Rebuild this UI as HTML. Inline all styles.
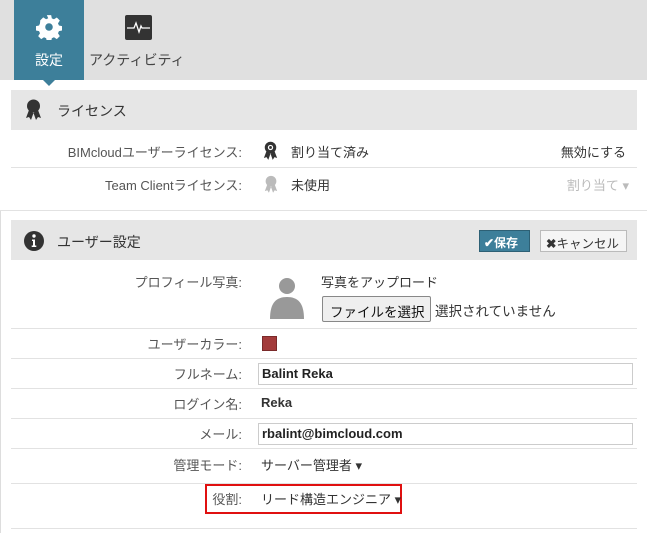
<!DOCTYPE html>
<html><head><meta charset="utf-8"><style>
*{margin:0;padding:0;box-sizing:border-box}
body{width:647px;height:533px;overflow:hidden;background:#fff;font-family:"Liberation Sans","Noto Sans CJK JP",sans-serif;font-size:13px;color:#333;position:relative}
.a{position:absolute;white-space:nowrap}
.lab{position:absolute;right:405px;white-space:nowrap;color:#555}
.sep{position:absolute;left:11px;width:626px;height:1px;background:#e2e2e2}
.hdr{position:absolute;left:11px;width:626px;height:40px;background:#e6e6e6}
.inp{position:absolute;left:258px;width:375px;height:22px;border:1px solid #ccc;font-weight:bold;padding:2px 0 0 3px;color:#222}
</style></head><body>
<div class="a" style="left:0;top:0;width:647px;height:80px;background:#e0e0e0"></div>
<div class="a" style="left:14px;top:0;width:70px;height:80px;background:#3d7f9a"></div>
<div class="a" style="left:43px;top:80px;width:0;height:0;border-left:6px solid transparent;border-right:6px solid transparent;border-top:6px solid #3d7f9a"></div>
<svg class="a" style="left:36px;top:14px" width="26" height="26" viewBox="0 0 24 24"><path fill="#fff" d="M10 1h4l.6 3 2 .9 2.6-1.7 2.8 2.8-1.7 2.6.9 2 3 .6v4l-3 .6-.9 2 1.7 2.6-2.8 2.8-2.6-1.7-2 .9-.6 3h-4l-.6-3-2-.9-2.6 1.7-2.8-2.8 1.7-2.6-.9-2-3-.6v-4l3-.6.9-2L3.9 5.9l2.8-2.8 2.6 1.7 2-.9z"/><circle cx="12" cy="12" r="3.5" fill="#3d7f9a"/></svg>
<div class="a" style="left:35px;top:50px;color:#fff;font-size:14px">設定</div>
<svg class="a" style="left:125px;top:15px" width="27" height="25" viewBox="0 0 27 25"><rect width="27" height="25" rx="2" fill="#333"/><path d="M2 13h7l2-5 3 9 2-6 1 2h8" stroke="#fff" stroke-width="1.3" fill="none"/></svg>
<div class="a" style="left:89px;top:50px;font-size:14px;color:#444">アクティビティ</div>

<div class="a" style="left:0;top:210px;width:1px;height:323px;background:#ddd"></div>
<div class="hdr" style="top:90px"></div>
<svg class="a" style="left:25px;top:99px" width="17" height="22" viewBox="0 0 17 22"><circle cx="8.5" cy="7" r="6.5" fill="#333"/><path d="M4 11l-3 8 3-1 2 3 2.5-7zM13 11l3 8-3-1-2 3-2.5-7z" fill="#333"/></svg>
<div class="a" style="left:57px;top:101px;font-size:14px;color:#333">ライセンス</div>
<div class="lab" style="top:142px">BIMcloudユーザーライセンス:</div>
<svg class="a" style="left:263px;top:141px" width="15" height="20" viewBox="0 0 17 22"><circle cx="8.5" cy="7" r="6.5" fill="#333"/><circle cx="8.5" cy="7" r="3" fill="#fff"/><circle cx="8.5" cy="7" r="1.6" fill="#333"/><path d="M4 11l-3 8 3-1 2 3 2.5-7zM13 11l3 8-3-1-2 3-2.5-7z" fill="#333"/></svg>
<div class="a" style="left:291px;top:142px">割り当て済み</div>
<div class="a" style="right:21px;top:142px">無効にする</div>
<div class="sep" style="top:167px"></div>
<div class="lab" style="top:175px">Team Clientライセンス:</div>
<svg class="a" style="left:264px;top:175px" width="14" height="19" viewBox="0 0 17 22"><circle cx="8.5" cy="7" r="6.5" fill="#bbb"/><path d="M4 11l-3 8 3-1 2 3 2.5-7zM13 11l3 8-3-1-2 3-2.5-7z" fill="#bbb"/></svg>
<div class="a" style="left:291px;top:175px">未使用</div>
<div class="a" style="right:18px;top:175px;color:#bbb">割り当て ▾</div>
<div class="a" style="left:0;top:210px;width:647px;height:1px;background:#e2e2e2"></div>

<div class="hdr" style="top:220px"></div>
<svg class="a" style="left:24px;top:231px" width="20" height="20" viewBox="0 0 20 20"><circle cx="10" cy="10" r="10" fill="#333"/><circle cx="10" cy="5" r="1.7" fill="#fff"/><path d="M8 8.5h3v6h1.3v1.5H7.7v-1.5H9v-4.5H8z" fill="#fff"/></svg>
<div class="a" style="left:57px;top:232px;font-size:14px">ユーザー設定</div>
<div class="a" style="left:479px;top:230px;width:51px;height:22px;background:#3d7f9a;border:1px solid #2d6075;color:#fff;font-weight:bold;font-size:12px;padding:3px 0 0 4px">✔保存</div>
<div class="a" style="left:540px;top:230px;width:87px;height:22px;background:#f5f5f5;border:1px solid #bbb;color:#333;font-size:12.5px;padding:2px 0 0 5px"><b>✖</b>キャンセル</div>

<div class="lab" style="top:272px">プロフィール写真:</div>
<svg class="a" style="left:269px;top:272px" width="36" height="50" viewBox="0 0 36 50"><circle cx="18" cy="14" r="8" fill="#999"/><path d="M1 47c0-16 6-22 17-22s17 6 17 22z" fill="#999"/></svg>
<div class="a" style="left:321px;top:272px">写真をアップロード</div>
<div class="a" style="left:322px;top:296px;width:109px;height:26px;border:1px solid #888;border-radius:2px;background:#efefef;font-size:13.5px;padding:4px 0 0 7px;color:#111">ファイルを選択</div>
<div class="a" style="left:435px;top:300px;font-size:13.5px">選択されていません</div>
<div class="sep" style="top:328px"></div>
<div class="lab" style="top:334px">ユーザーカラー:</div>
<div class="a" style="left:262px;top:336px;width:15px;height:15px;background:#a33b3b;border:1px solid #7a2a2a"></div>
<div class="sep" style="top:358px"></div>
<div class="lab" style="top:364px">フルネーム:</div>
<div class="inp" style="top:363px">Balint Reka</div>
<div class="sep" style="top:388px"></div>
<div class="lab" style="top:394px">ログイン名:</div>
<div class="a" style="left:261px;top:395px;font-weight:bold">Reka</div>
<div class="sep" style="top:418px"></div>
<div class="lab" style="top:424px">メール:</div>
<div class="inp" style="top:423px">rbalint@bimcloud.com</div>
<div class="sep" style="top:448px"></div>
<div class="lab" style="top:455px">管理モード:</div>
<div class="a" style="left:261px;top:455px">サーバー管理者 ▾</div>
<div class="sep" style="top:483px"></div>
<div class="a" style="left:205px;top:484px;width:197px;height:30px;border:2px solid #e01010"></div>
<div class="lab" style="top:489px">役割:</div>
<div class="a" style="left:261px;top:489px">リード構造エンジニア ▾</div>
<div class="sep" style="top:528px"></div>
</body></html>
